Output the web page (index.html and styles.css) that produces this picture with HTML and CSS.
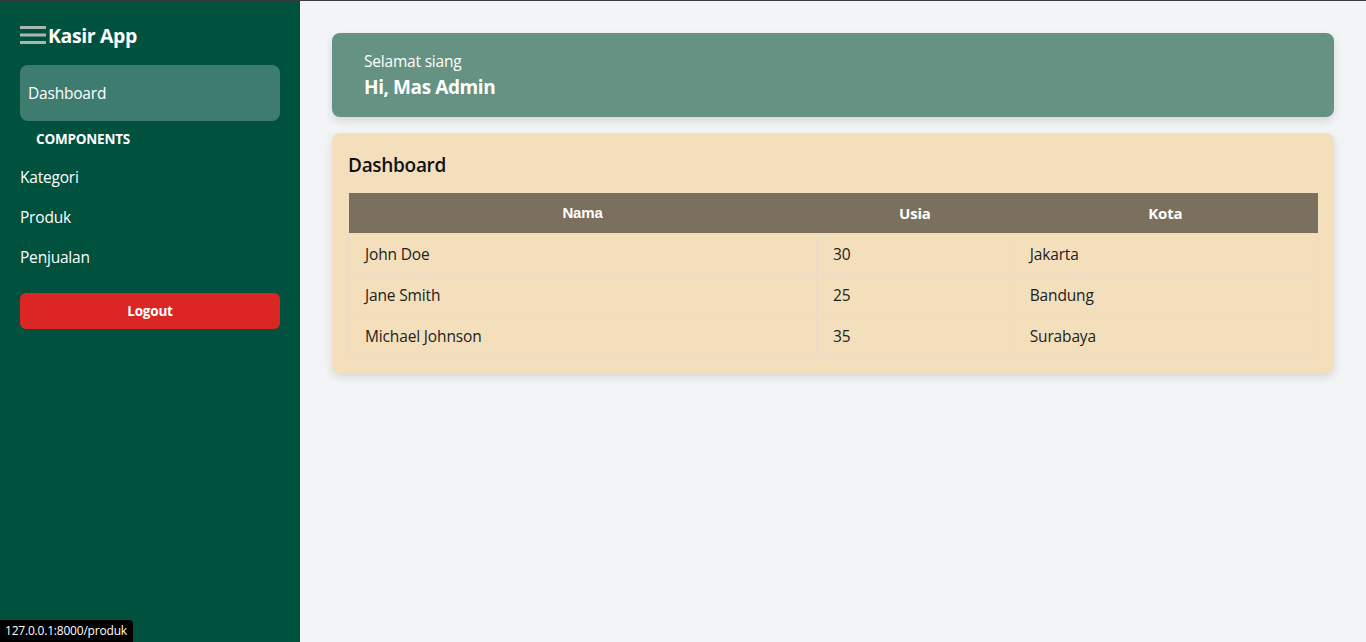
FILE: index.html
```html
<!DOCTYPE html>
<html lang="id">
<head>
<meta charset="utf-8">
<title>Kasir App</title>
<link rel="stylesheet" href="styles.css">
</head>
<body>
<div class="layout">
  <aside class="sidebar">
    <div class="brand">
      <svg class="burger" width="26" height="18" viewBox="0 0 26 18" aria-hidden="true">
        <rect x="0" y="0" width="26" height="3" fill="#a9b7b2"/>
        <rect x="0" y="7.5" width="26" height="3" fill="#a9b7b2"/>
        <rect x="0" y="15" width="26" height="3" fill="#a9b7b2"/>
      </svg>
      <span class="brand-name">Kasir App</span>
    </div>
    <nav class="nav">
      <a class="nav-item active" href="#">Dashboard</a>
      <div class="nav-heading">COMPONENTS</div>
      <a class="nav-link" href="#">Kategori</a>
      <a class="nav-link" href="#">Produk</a>
      <a class="nav-link" href="#">Penjualan</a>
    </nav>
    <button class="logout">Logout</button>
  </aside>
  <main class="main">
    <section class="welcome">
      <div class="greet">Selamat siang</div>
      <div class="hello">Hi, Mas Admin</div>
    </section>
    <section class="card">
      <h2 class="card-title">Dashboard</h2>
      <table class="data">
        <thead>
          <tr><th class="c-nama">Nama</th><th class="c-usia">Usia</th><th class="c-kota">Kota</th></tr>
        </thead>
        <tbody>
          <tr><td>John Doe</td><td>30</td><td>Jakarta</td></tr>
          <tr><td>Jane Smith</td><td>25</td><td>Bandung</td></tr>
          <tr><td>Michael Johnson</td><td>35</td><td>Surabaya</td></tr>
        </tbody>
      </table>
    </section>
  </main>
</div>
<div class="status">127.0.0.1:8000/produk</div>
</body>
</html>
```

FILE: styles.css
```css
* { box-sizing: border-box; }
html, body { margin: 0; height: 100%; }
body {
  font-family: "Open Sans", "Noto Sans", sans-serif;
  background: #f3f4f6;
  border-top: 1px solid #3a3a3a;
  overflow: hidden;
}
.layout { display: flex; height: 641px; }
.sidebar {
  width: 300px;
  flex: none;
  background: #01513f;
  padding: 19px 20px;
  color: #fff;
}
.brand { display: flex; align-items: center; gap: 2px; height: 30px; }
.burger { display: block; }
.brand-name { font-size: 19.5px; font-weight: 700; letter-spacing: -0.4px; }
.nav { display: flex; flex-direction: column; margin-top: 15px; }
.nav-item {
  display: flex; align-items: center;
  height: 56px; padding: 0 8px;
  border-radius: 8px;
  background: #3e7c6f;
  color: #fff; text-decoration: none;
  font-size: 15.5px; letter-spacing: -0.2px;
}
.nav-heading {
  font-size: 13.5px; font-weight: 700;
  padding: 9px 16px 0;
  height: 36px;
  letter-spacing: -0.2px;
}
.nav-link {
  display: flex; align-items: center; height: 40px;
  color: #fff; text-decoration: none;
  font-size: 15.5px; letter-spacing: -0.2px;
}
.logout {
  display: block; width: 100%;
  margin-top: 16px;
  height: 36px;
  border: 0; border-radius: 6px;
  background: #dc2626; color: #fff;
  font-family: inherit; font-weight: 700; font-size: 13.5px;
  letter-spacing: -0.2px;
}
.main { flex: 1; padding: 32px; display: flex; flex-direction: column; gap: 16px; }
.welcome {
  background: #659282;
  border-radius: 8px;
  padding: 18px 32px 0;
  height: 84px;
  color: #fff;
  box-shadow: 0 4px 8px rgba(0,0,0,0.12);
}
.greet { font-size: 15.5px; letter-spacing: -0.2px; line-height: 20px; }
.hello { font-size: 19px; font-weight: 700; letter-spacing: -0.4px; line-height: 28px; margin-top: 2px; }
.card {
  background: #f4dfbc;
  border-radius: 8px;
  padding: 16px;
  box-shadow: 0 4px 10px rgba(0,0,0,0.12);
}
.card-title {
  margin: 4px 0 16px;
  font-size: 19px; font-weight: 600; letter-spacing: -0.3px;
  line-height: 24px; color: #111;
}
.data { width: 100%; border-collapse: collapse; font-size: 15.5px; letter-spacing: -0.15px; }
.data th {
  background: #7a705d; color: #fff;
  font-weight: 700; height: 40px; padding: 0 16px;
  font-size: 15px;
}
.c-nama { width: 48.3%; font-family: "Liberation Sans", Arial, sans-serif; }
.c-usia { width: 20.3%; }
.data td {
  border: 1px solid #ecdcc6;
  padding: 0 15px 0 16px;
  height: 41px;
  color: #222;
}
.status {
  position: fixed; left: 0; bottom: 0;
  background: #000; color: #fff;
  font-size: 12px; padding: 2px 6px 3px 5px;
  border-top-right-radius: 4px;
  letter-spacing: -0.2px;
}
```
